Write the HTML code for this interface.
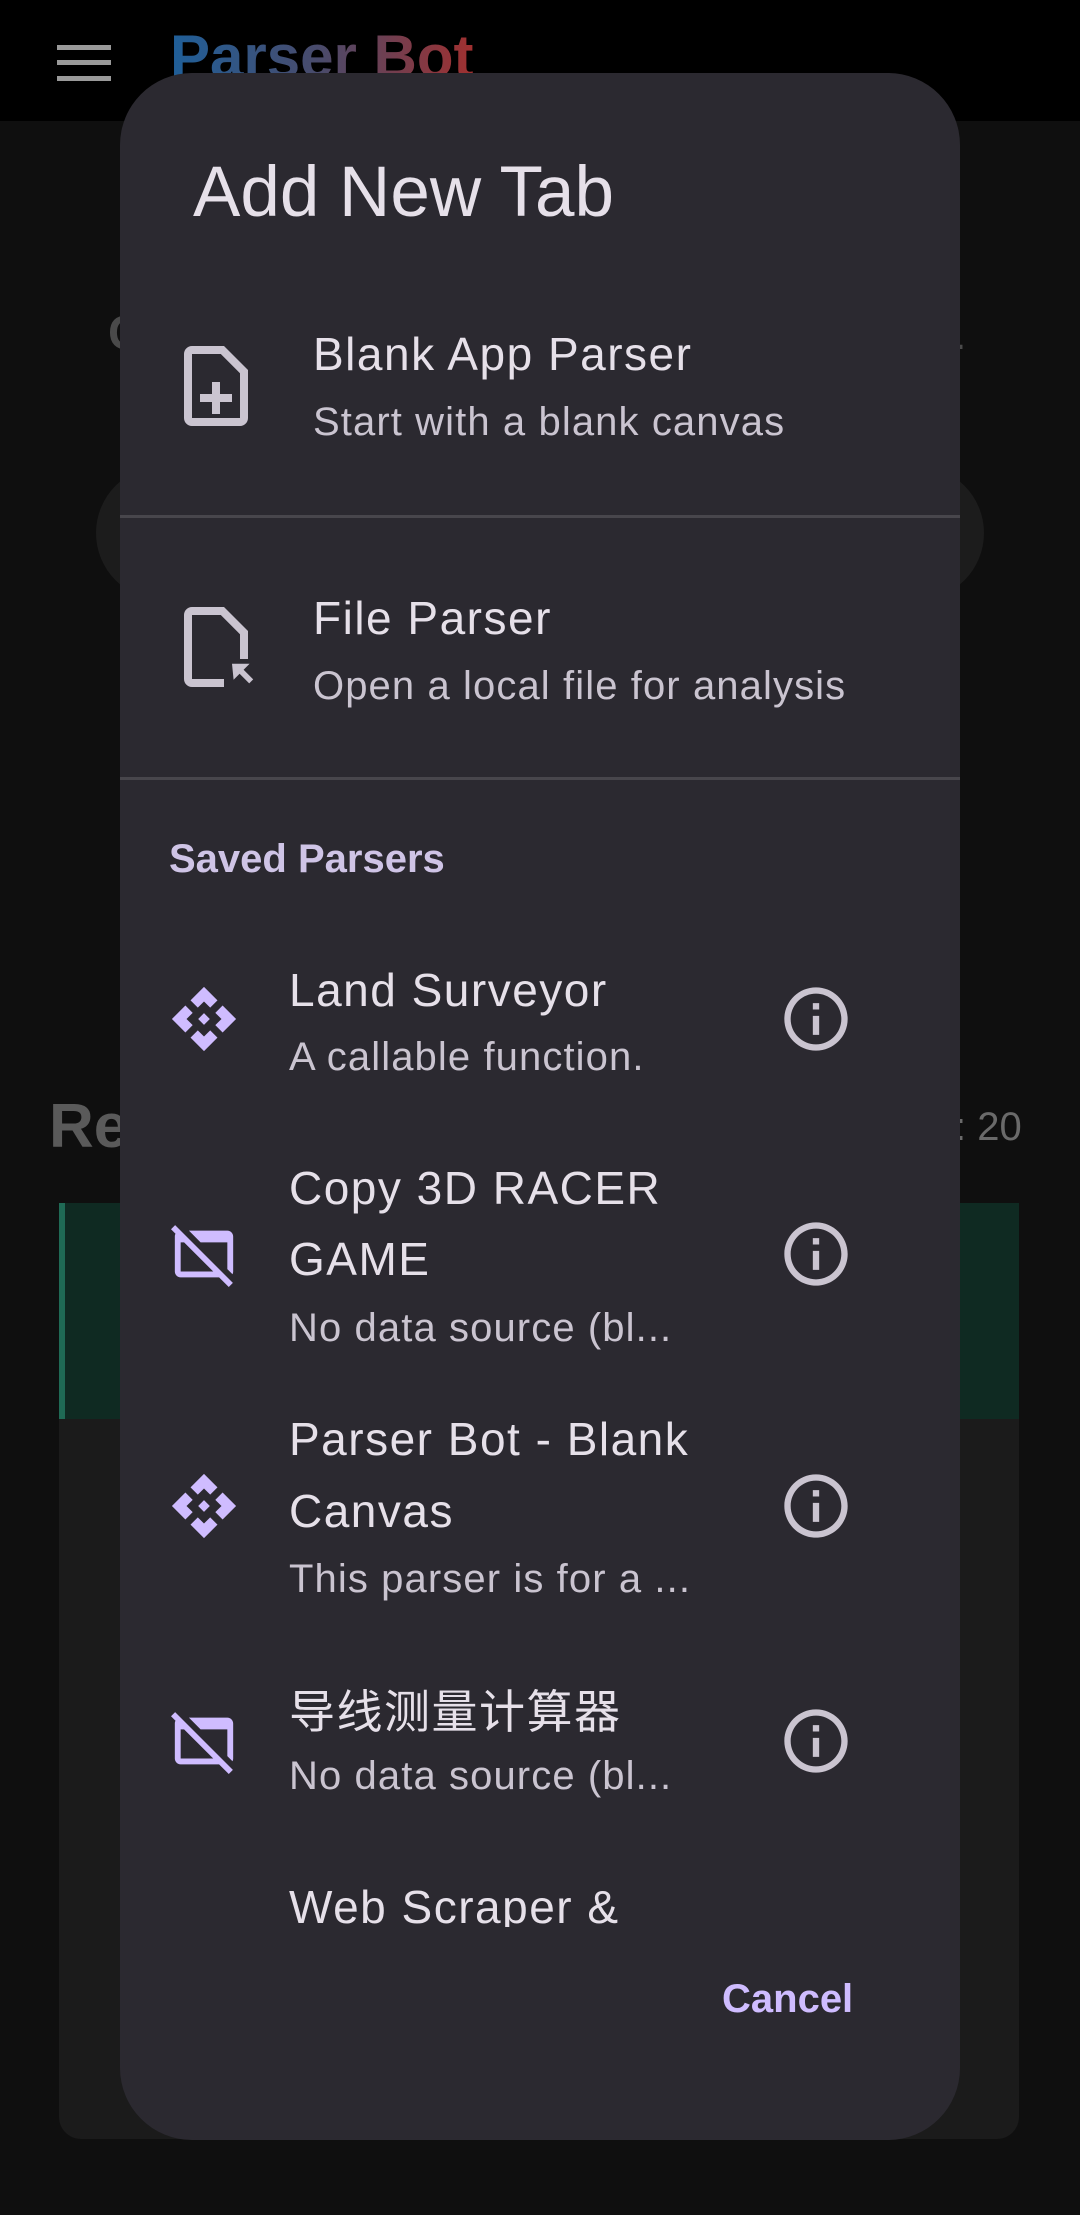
<!DOCTYPE html>
<html><head><meta charset="utf-8">
<style>
*{margin:0;padding:0;box-sizing:border-box}
html,body{width:1080px;height:2215px;overflow:hidden;background:#0f0f0f;font-family:"Liberation Sans","Noto Sans CJK SC",sans-serif}
.abs{position:absolute}
.t{position:absolute;color:#e6e0e9;white-space:nowrap}
.ti{font-size:46px;line-height:50px;letter-spacing:1.5px}
.st{font-size:40px;line-height:44px;color:#cac4d0;letter-spacing:1.1px}
</style></head><body>
<!-- background app -->
<div class="abs" style="left:0;top:0;width:1080px;height:121px;background:#000"></div>
<div class="abs" style="left:57px;top:45px;width:54px;height:5px;background:#9a9a9a"></div>
<div class="abs" style="left:57px;top:60px;width:54px;height:5px;background:#9a9a9a"></div>
<div class="abs" style="left:57px;top:76px;width:54px;height:5px;background:#9a9a9a"></div>
<div class="t" style="left:170px;top:24px;font-size:60px;line-height:66px;font-weight:bold;background:linear-gradient(90deg,#1f5f99,#4a4a6a 50%,#a03030);-webkit-background-clip:text;background-clip:text;color:transparent">Parser Bot</div>
<div class="abs" style="left:96px;top:466px;width:888px;height:134px;border-radius:67px;background:#1c1c1c"></div>
<div class="t" style="left:108px;top:306px;font-size:48px;line-height:56px;font-weight:bold;color:#4a4a4a">C</div>
<div class="t" style="left:955px;top:316px;font-size:40px;line-height:40px;color:#4a4a4a">.</div>
<div class="t" style="left:49px;top:1095px;font-size:62px;line-height:64px;font-weight:bold;color:#5a5a5a">Re</div>
<div class="t" style="left:955px;top:1105px;font-size:40px;line-height:44px;color:#6a6a6a">: 20</div>
<div class="abs" style="left:59px;top:1203px;width:960px;height:936px;border-radius:0 0 22px 22px;background:#1b1b1b"></div>
<div class="abs" style="left:59px;top:1203px;width:960px;height:216px;background:#0f2a22;border-left:6px solid #1f6a55"></div>
<!-- dialog -->
<div class="abs" style="left:120px;top:73px;width:840px;height:2067px;border-radius:72px;background:#2b2930;overflow:hidden">
  <div class="t" style="left:73px;top:80px;font-size:71px;line-height:80px">Add New Tab</div>
  <svg class="abs" style="left:48px;top:265px" width="96" height="96" viewBox="0 0 24 24" fill="#cac4d0"><path d="M13 11h-2v3H8v2h3v3h2v-3h3v-2h-3zm1-9H6c-1.1 0-2 .9-2 2v16c0 1.1.89 2 1.99 2H18c1.1 0 2-.9 2-2V8l-6-6zm4 18H6V4h7.2L18 8.8V20z"/></svg>
  <div class="t ti" style="left:193px;top:256px">Blank App Parser</div>
  <div class="t st" style="left:193px;top:327px">Start with a blank canvas</div>
  <div class="abs" style="left:0;top:442px;width:840px;height:3px;background:#48464c"></div>
  <svg class="abs" style="left:48px;top:526px" width="96" height="96" viewBox="0 0 24 24" fill="#cac4d0"><path d="M14 2H6c-1.1 0-2 .9-2 2v16c0 1.1.9 2 2 2h8v-2H6V4h7.2L18 8.8V15h2V8l-6-6z"/><path d="M16 16.2h4.4l-1.5 1.5 2.4 2.4-1 1-2.4-2.4-1.5 1.5z"/></svg>
  <div class="t ti" style="left:193px;top:520px">File Parser</div>
  <div class="t st" style="left:193px;top:591px">Open a local file for analysis</div>
  <div class="abs" style="left:0;top:704px;width:840px;height:3px;background:#48464c"></div>
  <div class="t" style="left:49px;top:763px;font-size:40px;line-height:46px;font-weight:bold;color:#cfc4e6">Saved Parsers</div>
</div>
<!-- list (clipped) -->
<div class="abs" style="left:120px;top:900px;width:840px;height:1027px;overflow:hidden">
  <svg class="abs" style="left:49px;top:84px" width="70" height="70" viewBox="0 0 24 24" fill="#cfbcff"><path d="M14 12l-2 2-2-2 2-2 2 2zm-2-6l2.12 2.12 2.5-2.5L12 1 7.38 5.62l2.5 2.5L12 6zm-6 6l2.12-2.12-2.5-2.5L1 12l4.62 4.62 2.5-2.5L6 12zm12 0l-2.12 2.12 2.5 2.5L23 12l-4.620-4.62-2.5 2.5L18 12zm-6 6l-2.12-2.12-2.5 2.5L12 23l4.62-4.62-2.5-2.5L12 18z"/></svg>
  <div class="t ti" style="left:169px;top:65px">Land Surveyor</div>
  <div class="t st" style="left:169px;top:135px">A callable function.</div>
  <svg class="abs" style="left:658px;top:81px" width="76" height="76" viewBox="0 0 24 24" fill="#cac4d0"><path d="M11 7h2v2h-2zm0 4h2v6h-2zm1-9C6.48 2 2 6.48 2 12s4.48 10 10 10 10-4.48 10-10S17.52 2 12 2zm0 18c-4.41 0-8-3.590-8-8s3.59-8 8-8 8 3.59 8 8-3.59 8-8 8z"/></svg>

  <svg class="abs" style="left:49px;top:319px" width="70" height="70" viewBox="0 0 24 24" fill="#cfbcff"><path d="M6.83 4H20c1.11 0 2 .9 2 2v12c0 .34-.09.66-.23.94L20 17.17V8h-9.17l-4-4zm13.66 19.31L17.17 20H4c-1.11 0-2-.9-2-2V6c0-.34.08-.66.23-.94L.69 3.51 2.1 2.1l19.8 19.8-1.41 1.41zM15.17 18l-10-10H4v10h11.17z"/></svg>
  <div class="t ti" style="left:169px;top:263px">Copy 3D RACER</div>
  <div class="t ti" style="left:169px;top:334px">GAME</div>
  <div class="t st" style="left:169px;top:406px">No data source (bl...</div>
  <svg class="abs" style="left:658px;top:316px" width="76" height="76" viewBox="0 0 24 24" fill="#cac4d0"><path d="M11 7h2v2h-2zm0 4h2v6h-2zm1-9C6.48 2 2 6.48 2 12s4.48 10 10 10 10-4.48 10-10S17.52 2 12 2zm0 18c-4.41 0-8-3.59-8-8s3.59-8 8-8 8 3.59 8 8-3.59 8-8 8z"/></svg>

  <svg class="abs" style="left:49px;top:571px" width="70" height="70" viewBox="0 0 24 24" fill="#cfbcff"><path d="M14 12l-2 2-2-2 2-2 2 2zm-2-6l2.12 2.12 2.5-2.5L12 1 7.38 5.62l2.5 2.5L12 6zm-6 6l2.12-2.12-2.5-2.5L1 12l4.62 4.62 2.5-2.5L6 12zm12 0l-2.12 2.12 2.5 2.5L23 12l-4.62-4.62-2.5 2.5L18 12zm-6 6l-2.12-2.12-2.5 2.5L12 23l4.62-4.62-2.5-2.5L12 18z"/></svg>
  <div class="t ti" style="left:169px;top:514px">Parser Bot - Blank</div>
  <div class="t ti" style="left:169px;top:586px">Canvas</div>
  <div class="t st" style="left:169px;top:657px">This parser is for a ...</div>
  <svg class="abs" style="left:658px;top:568px" width="76" height="76" viewBox="0 0 24 24" fill="#cac4d0"><path d="M11 7h2v2h-2zm0 4h2v6h-2zm1-9C6.48 2 2 6.48 2 12s4.48 10 10 10 10-4.48 10-10S17.52 2 12 2zm0 18c-4.41 0-8-3.59-8-8s3.59-8 8-8 8 3.59 8 8-3.59 8-8 8z"/></svg>

  <svg class="abs" style="left:49px;top:806px" width="70" height="70" viewBox="0 0 24 24" fill="#cfbcff"><path d="M6.83 4H20c1.11 0 2 .9 2 2v12c0 .34-.09.66-.23.94L20 17.17V8h-9.17l-4-4zm13.66 19.31L17.17 20H4c-1.11 0-2-.9-2-2V6c0-.34.08-.66.23-.94L.69 3.51 2.1 2.1l19.8 19.8-1.41 1.41zM15.17 18l-10-10H4v10h11.17z"/></svg>
  <div class="t ti" style="left:169px;top:787px">导线测量计算器</div>
  <div class="t st" style="left:169px;top:854px">No data source (bl...</div>
  <svg class="abs" style="left:658px;top:803px" width="76" height="76" viewBox="0 0 24 24" fill="#cac4d0"><path d="M11 7h2v2h-2zm0 4h2v6h-2zm1-9C6.48 2 2 6.48 2 12s4.48 10 10 10 10-4.48 10-10S17.52 2 12 2zm0 18c-4.41 0-8-3.59-8-8s3.59-8 8-8 8 3.59 8 8-3.59 8-8 8z"/></svg>

  <div class="t ti" style="left:169px;top:982px">Web Scraper &amp;</div>
</div>
<div class="t" style="left:722px;top:1976px;font-size:40px;line-height:46px;font-weight:bold;color:#cfbcff">Cancel</div>
</body></html>
